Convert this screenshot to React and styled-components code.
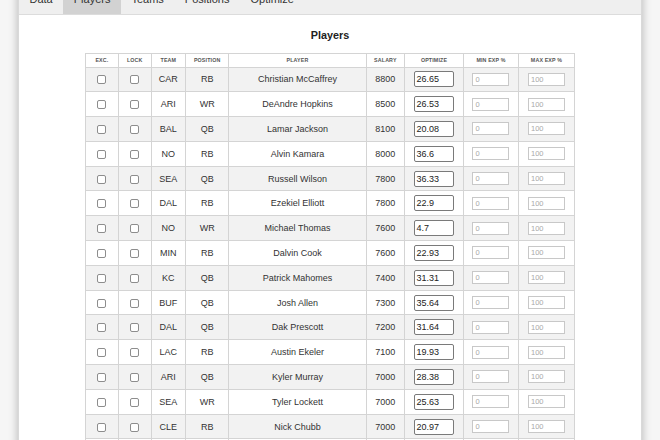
import React from "react";
import styled, { createGlobalStyle } from "styled-components";

const GlobalStyle = createGlobalStyle`
  html, body { margin: 0; padding: 0; }
  body {
    background: #f6f6f6;
    font-family: "Liberation Sans", Arial, sans-serif;
    overflow: hidden;
  }
`;

const Panel = styled.div`
  margin: -17px 18px 0;
  min-height: 480px;
  background: #fff;
  border: 1px solid #d9d9d9;
  box-shadow: 0 0 9px rgba(0, 0, 0, 0.28);
`;

const TabBar = styled.div`
  display: flex;
  height: 30px;
  background: #efefef;
  border-bottom: 1px solid #dcdcdc;
  padding-left: 0;
`;

const Tab = styled.div`
  padding: 0 10.5px;
  line-height: 30px;
  font-size: 11px;
  color: #333;
  background: ${(p) => (p.$active ? "#d2d2d2" : "transparent")};
`;

const Title = styled.h2`
  margin: 14px 0 11px;
  font-size: 10.8px;
  line-height: 13px;
  font-weight: bold;
  text-align: center;
  color: #222;
`;

const Table = styled.table`
  border-collapse: collapse;
  table-layout: fixed;
  width: 489px;
  margin: 0 auto;
`;

const HeadCell = styled.th`
  height: 12.5px;
  padding: 0;
  border: 1px solid #d4d4d4;
  font-size: 5.3px;
  font-weight: bold;
  letter-spacing: 0.15px;
  color: #555;
  text-align: center;
  vertical-align: middle;
  text-transform: uppercase;
`;

const Row = styled.tr`
  height: 24.8px;
  background: ${(p) => (p.$shade ? "#f2f2f2" : "#fff")};
`;

const Cell = styled.td`
  padding: 0;
  border: 1px solid #d4d4d4;
  font-size: 9px;
  color: #333;
  text-align: center;
  vertical-align: middle;
`;

const Check = styled.span`
  display: inline-block;
  width: 9px;
  height: 9px;
  box-sizing: border-box;
  border: 1px solid #8d8d8d;
  border-radius: 2px;
  background: #fff;
  vertical-align: middle;
`;

const OptInput = styled.input`
  box-sizing: border-box;
  width: 40px;
  height: 16px;
  margin: 0;
  padding: 0 1.5px;
  border: 1px solid #7a7a7a;
  border-radius: 2px;
  font-family: "Liberation Sans", Arial, sans-serif;
  font-size: 9px;
  color: #222;
  background: #fff;
  vertical-align: middle;
  outline: none;
`;

const ExpInput = styled.input`
  box-sizing: border-box;
  width: 37px;
  height: 13px;
  margin: 0;
  padding: 0 2px;
  border: 1px solid #c8c8c8;
  border-radius: 0;
  font-family: "Liberation Sans", Arial, sans-serif;
  font-size: 7.5px;
  color: #a8a8a8;
  background: #fff;
  vertical-align: middle;
  outline: none;
`;

const cols = [32.7, 33, 34.3, 43.3, 137.4, 38.3, 59, 55, 56];
const heads = ["Exc.", "Lock", "Team", "Position", "Player", "Salary", "Optimize", "Min Exp %", "Max Exp %"];

const players = [
  ["CAR", "RB", "Christian McCaffrey", 8800, "26.65"],
  ["ARI", "WR", "DeAndre Hopkins", 8500, "26.53"],
  ["BAL", "QB", "Lamar Jackson", 8100, "20.08"],
  ["NO", "RB", "Alvin Kamara", 8000, "36.6"],
  ["SEA", "QB", "Russell Wilson", 7800, "36.33"],
  ["DAL", "RB", "Ezekiel Elliott", 7800, "22.9"],
  ["NO", "WR", "Michael Thomas", 7600, "4.7"],
  ["MIN", "RB", "Dalvin Cook", 7600, "22.93"],
  ["KC", "QB", "Patrick Mahomes", 7400, "31.31"],
  ["BUF", "QB", "Josh Allen", 7300, "35.64"],
  ["DAL", "QB", "Dak Prescott", 7200, "31.64"],
  ["LAC", "RB", "Austin Ekeler", 7100, "19.93"],
  ["ARI", "QB", "Kyler Murray", 7000, "28.38"],
  ["SEA", "WR", "Tyler Lockett", 7000, "25.63"],
  ["CLE", "RB", "Nick Chubb", 7000, "20.97"],
  ["MIN", "WR", "Adam Thielen", 6900, "21.4"],
];

const tabs = ["Data", "Players", "Teams", "Positions", "Optimize"];

export default function App() {
  return (
    <>
      <GlobalStyle />
      <Panel>
        <TabBar>
          {tabs.map((t) => (
            <Tab key={t} $active={t === "Players"}>
              {t}
            </Tab>
          ))}
        </TabBar>
        <Title>Players</Title>
        <Table>
          <colgroup>
            {cols.map((w, i) => (
              <col key={i} style={{ width: w }} />
            ))}
          </colgroup>
          <thead>
            <tr>
              {heads.map((h) => (
                <HeadCell key={h}>{h}</HeadCell>
              ))}
            </tr>
          </thead>
          <tbody>
            {players.map((p, i) => (
              <Row key={i} $shade={i % 2 === 0}>
                <Cell>
                  <Check />
                </Cell>
                <Cell>
                  <Check />
                </Cell>
                <Cell>{p[0]}</Cell>
                <Cell>{p[1]}</Cell>
                <Cell>{p[2]}</Cell>
                <Cell>{p[3]}</Cell>
                <Cell>
                  <OptInput defaultValue={p[4]} />
                </Cell>
                <Cell>
                  <ExpInput defaultValue="0" />
                </Cell>
                <Cell>
                  <ExpInput defaultValue="100" />
                </Cell>
              </Row>
            ))}
          </tbody>
        </Table>
      </Panel>
    </>
  );
}
